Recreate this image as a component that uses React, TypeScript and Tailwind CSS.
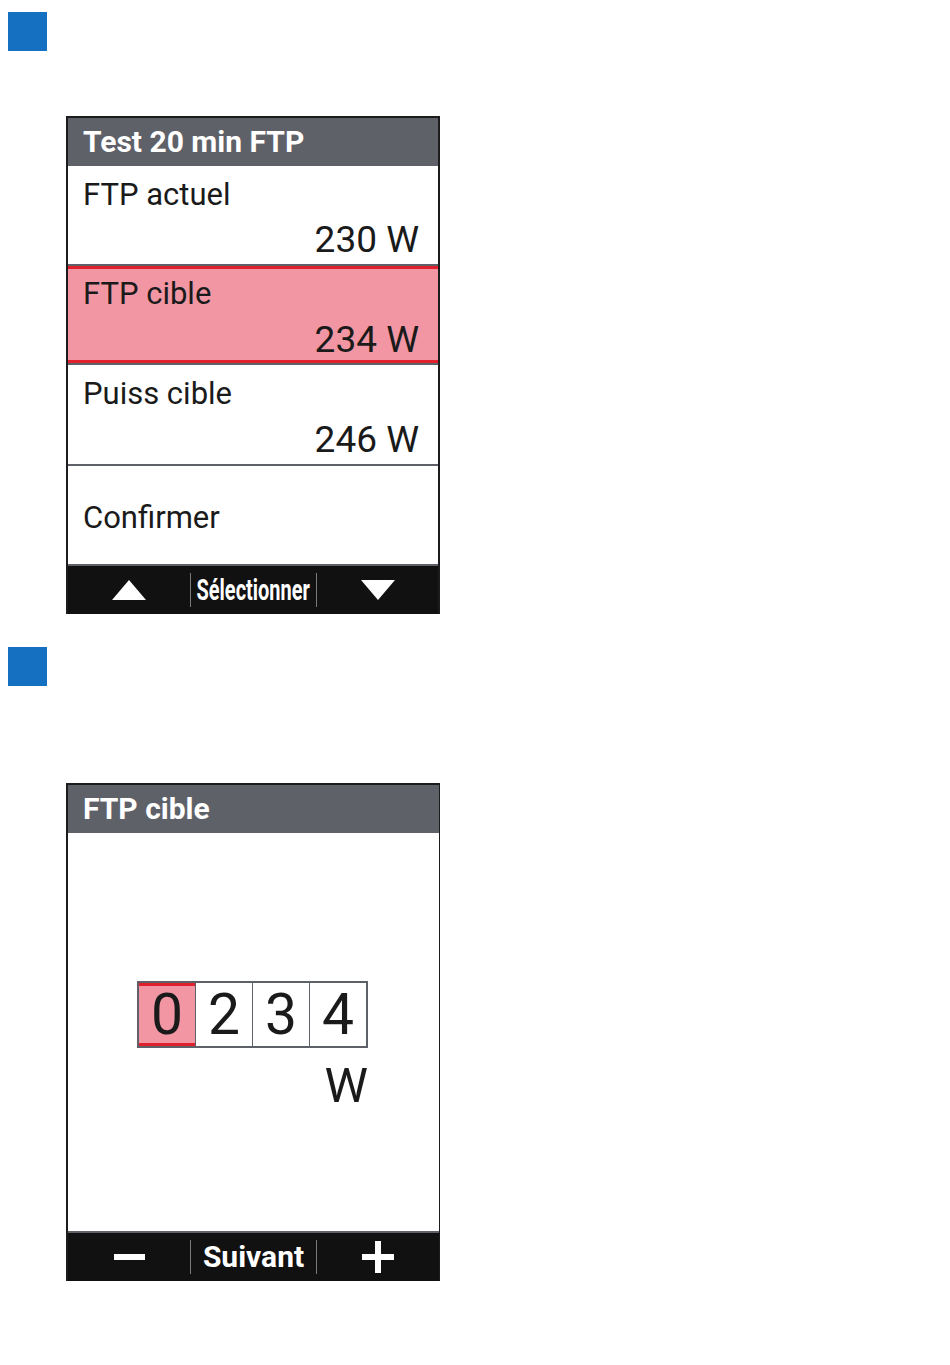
import React from "react";

const font = { fontFamily: "Roboto, 'Liberation Sans', sans-serif" };

function BlueSquare() {
  return <div className="w-[39px] h-[39px] bg-[#1670c2] ml-[8px]" />;
}

function Footer({ left, center, right, condensed }: { left: React.ReactNode; center: string; right: React.ReactNode; condensed?: boolean }) {
  return (
    <div className="h-[48px] bg-[#111111] flex items-center">
      <div className="w-[122px] flex justify-center items-center">{left}</div>
      <div className="w-px h-[34px] bg-[#7a7a7a]" />
      <div className="w-[125px] flex justify-center items-center overflow-visible">
        {condensed ? (
          <span className="inline-block text-white font-bold text-[30px] leading-none scale-x-[0.665] whitespace-nowrap">{center}</span>
        ) : (
          <span className="text-white font-bold text-[30px] leading-none whitespace-nowrap">{center}</span>
        )}
      </div>
      <div className="w-px h-[34px] bg-[#7a7a7a]" />
      <div className="flex-1 flex justify-center items-center">{right}</div>
    </div>
  );
}

function Header({ title }: { title: string }) {
  return (
    <div className="h-[48px] bg-[#5f6169] flex items-center pl-[15px]">
      <span className="text-white font-bold text-[30px] leading-none">{title}</span>
    </div>
  );
}

export default function App() {
  return (
    <div className="w-[950px] h-[1365px] bg-white flex flex-col" style={font}>
      <div className="mt-[12px]">
        <BlueSquare />
      </div>
      <div className="mt-[65px] ml-[66px] w-[374px] border-l-2 border-t-2 border-r-2 border-[#1c1c1c] text-[#1a1a1a]">
        <Header title="Test 20 min FTP" />
        {/* Row 1 */}
        <div className="h-[100px] bg-white border-b-2 border-[#5f6169] pt-[13px] pl-[15px] pr-[19px] flex flex-col">
          <span className="text-[31px] leading-none">FTP actuel</span>
          <span className="text-[37px] leading-none mt-[11px] text-right">230 W</span>
        </div>
        {/* Row 2 highlighted */}
        <div className="h-[97px] bg-[#f296a3] border-y-[3px] border-[#e0202c] pt-[9px] pl-[15px] pr-[19px] flex flex-col">
          <span className="text-[31px] leading-none">FTP cible</span>
          <span className="text-[37px] leading-none mt-[12px] text-right">234 W</span>
        </div>
        {/* Row 3 */}
        <div className="h-[103px] bg-white border-t-2 border-b-2 border-[#5f6169] pt-[13px] pl-[15px] pr-[19px] flex flex-col">
          <span className="text-[31px] leading-none">Puiss cible</span>
          <span className="text-[37px] leading-none mt-[12px] text-right">246 W</span>
        </div>
        {/* Row 4 */}
        <div className="h-[100px] bg-white border-b-2 border-[#5f6169] pt-[36px] pl-[15px]">
          <span className="text-[31px] leading-none block">Confirmer</span>
        </div>
        <Footer
          condensed
          center="Sélectionner"
          left={
            <svg width="34" height="20" viewBox="0 0 34 20">
              <polygon points="17,0 34,20 0,20" fill="#ffffff" />
            </svg>
          }
          right={
            <svg width="34" height="20" viewBox="0 0 34 20">
              <polygon points="0,0 34,0 17,20" fill="#ffffff" />
            </svg>
          }
        />
      </div>

      <div className="mt-[33px]">
        <BlueSquare />
      </div>

      <div className="mt-[97px] ml-[66px] w-[374px] border-l-2 border-t-2 border-r border-[#1c1c1c] text-[#1a1a1a]">
        <Header title="FTP cible" />
        <div className="h-[400px] bg-white border-b-2 border-[#5f6169] pt-[148px] pl-[69px]">
          <div className="w-[231px] flex flex-col">
            <div className="flex border-2 border-[#5f6169] h-[67px]">
              <div className="w-[56px] bg-[#f296a3] border-y-[3px] border-[#e0202c] flex items-center justify-center text-[57px] leading-none">0</div>
              <div className="w-[57px] border-l border-[#5f6169] flex items-center justify-center text-[57px] leading-none">2</div>
              <div className="w-[57px] border-l border-[#5f6169] flex items-center justify-center text-[57px] leading-none">3</div>
              <div className="flex-1 border-l border-[#5f6169] flex items-center justify-center text-[57px] leading-none">4</div>
            </div>
            <span className="mt-[13px] text-right text-[49px] leading-none">W</span>
          </div>
        </div>
        <Footer
          center="Suivant"
          left={<div className="w-[31px] h-[6px] bg-white" />}
          right={
            <svg width="32" height="32" viewBox="0 0 32 32">
              <rect x="13" y="0" width="6" height="32" fill="#ffffff" />
              <rect x="0" y="13" width="32" height="6" fill="#ffffff" />
            </svg>
          }
        />
      </div>
    </div>
  );
}
